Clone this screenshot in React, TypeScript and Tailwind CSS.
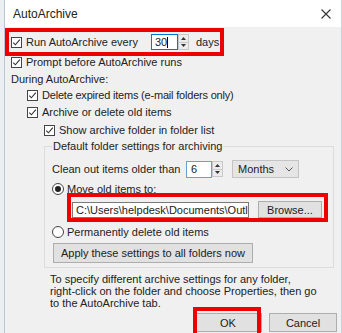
import React from 'react';

function Check() {
  return (
    <span className="w-[11px] h-[11px] border border-[#444] bg-white flex items-center justify-center shrink-0">
      <svg width="9" height="9" viewBox="0 0 9 9">
        <path d="M1.3 4.6 L3.4 6.8 L7.8 1.6" stroke="#333" strokeWidth="1.1" fill="none" />
      </svg>
    </span>
  );
}

function Radio({ on }: { on?: boolean }) {
  return (
    <span className="w-[12px] h-[12px] rounded-full border border-[#444] bg-white flex items-center justify-center shrink-0">
      {on && <span className="w-[6px] h-[6px] rounded-full bg-[#222]" />}
    </span>
  );
}

function Spinner() {
  return (
    <span className="w-[11px] h-[16px] flex flex-col border border-[#c8c8c8] bg-[#ececec] shrink-0">
      <span className="flex-1 flex items-center justify-center border-b border-[#c8c8c8]">
        <svg width="5" height="3" viewBox="0 0 5 3"><path d="M0 3 L2.5 0 L5 3 Z" fill="#333" /></svg>
      </span>
      <span className="flex-1 flex items-center justify-center">
        <svg width="5" height="3" viewBox="0 0 5 3"><path d="M0 0 L2.5 3 L5 0 Z" fill="#333" /></svg>
      </span>
    </span>
  );
}

function Row({ children, className = '' }: { children: React.ReactNode; className?: string }) {
  return <div className={`h-[16px] flex items-center ${className}`}>{children}</div>;
}

export default function App() {
  return (
    <div className="relative w-[342px] h-[333px] overflow-hidden flex bg-[#f0f0f0] text-[11px] leading-[12px] text-[#222] font-['Liberation_Sans',Arial,sans-serif]">
      {/* desktop strip on the left */}
      <div className="w-[5px] h-full bg-[#eceff2] border-r border-[#b9c6d3]" />

      <div className="flex-1 flex flex-col border-r border-[#c9d3dc]">
        {/* title bar */}
        <div className="h-[27px] bg-white flex items-center justify-between pl-[8px] pr-[10px] shrink-0">
          <span className="text-[12px] text-[#222]">AutoArchive</span>
          <svg width="10" height="10" viewBox="0 0 10 10">
            <path d="M0.5 0.5 L9.5 9.5 M9.5 0.5 L0.5 9.5" stroke="#333" strokeWidth="1.1" />
          </svg>
        </div>

        <div className="flex flex-col pl-[6px]">
          <Row className="mt-[7px]">
            <div className="w-[140px] flex items-center gap-[4px]">
              <Check />
              <span>Run AutoArchive every</span>
            </div>
            <span className="w-[27px] h-[16px] bg-white border border-[#0078d7] flex items-center pl-[3px]">30<span className="w-px h-[11px] bg-black" /></span>
            <Spinner />
            <span className="ml-[7px]">days</span>
          </Row>

          <Row className="mt-[4px] gap-[4px]">
            <Check />
            <span>Prompt before AutoArchive runs</span>
          </Row>

          <Row className="mt-[1px]">
            <span>During AutoArchive:</span>
          </Row>

          <Row className="pl-[16px] gap-[4px]">
            <Check />
            <span className="tracking-[-0.2px]">Delete expired items (e-mail folders only)</span>
          </Row>

          <Row className="mt-[1px] pl-[16px] gap-[4px]">
            <Check />
            <span>Archive or delete old items</span>
          </Row>

          <Row className="mt-[2px] pl-[33px] gap-[4px]">
            <Check />
            <span>Show archive folder in folder list</span>
          </Row>

          <fieldset className="ml-[33px] w-[290px] border border-[#dcdcdc] mt-[2px] pl-[7px] pb-[4px]">
            <legend className="px-[1px] h-[12px]">Default folder settings for archiving</legend>

            <div className="h-[18px] flex items-center mt-[8px]">
              <span className="w-[134px]">Clean out items older than</span>
              <span className="w-[26px] h-[17px] bg-white border border-[#6a9fd4] flex items-center pl-[4px]">6</span>
              <span className="h-[17px] flex items-center"><Spinner /></span>
              <span className="ml-[9px] w-[67px] h-[18px] bg-[#e5e5e5] border border-[#c4c4c4] flex items-center justify-between pl-[5px] pr-[5px]">
                Months
                <svg width="8" height="5" viewBox="0 0 8 5"><path d="M0.5 0.5 L4 4 L7.5 0.5" stroke="#555" fill="none" /></svg>
              </span>
            </div>

            <Row className="mt-[3px] gap-[3px]">
              <Radio on />
              <span>Move old items to:</span>
            </Row>

            <div className="h-[17px] flex items-center mt-[4px] pl-[20px]">
              <span className="w-[177px] h-[16px] bg-white border border-[#7a7a7a] flex items-center pl-[3px] overflow-hidden whitespace-nowrap">
                C:\Users\helpdesk\Documents\Outlo
              </span>
              <span className="ml-[9px] w-[64px] h-[17px] bg-[#e1e1e1] border border-[#adadad] flex items-center justify-center">
                Browse...
              </span>
            </div>

            <Row className="mt-[6px] gap-[3px]">
              <Radio />
              <span>Permanently delete old items</span>
            </Row>

            <div className="mt-[3px] ml-[1px] w-[200px] h-[20px] bg-[#e1e1e1] border border-[#adadad] flex items-center justify-center">
              Apply these settings to all folders now
            </div>
          </fieldset>

          <p className="mt-[5px] pl-[39px]">
            To specify different archive settings for any folder,
            <br />
            right-click on the folder and choose Properties, then go
            <br />
            to the AutoArchive tab.
          </p>

          <div className="mt-[4px] flex justify-end gap-[7px] pr-[4px]">
            <span className="w-[68px] h-[19px] bg-[#e1e1e1] border border-[#adadad] flex items-center justify-center">OK</span>
            <span className="w-[68px] h-[19px] bg-[#e1e1e1] border border-[#adadad] flex items-center justify-center">Cancel</span>
          </div>
        </div>
      </div>

      {/* red annotation boxes */}
      <div className="absolute left-[5px] top-[28px] w-[219px] h-[28px] border-[4px] border-[#ee0000]" />
      <div className="absolute left-[67px] top-[193px] w-[261px] h-[29px] border-[4px] border-[#ee0000]" />
      <div className="absolute left-[193px] top-[307px] w-[68px] h-[30px] border-[4px] border-[#ee0000]" />
    </div>
  );
}
